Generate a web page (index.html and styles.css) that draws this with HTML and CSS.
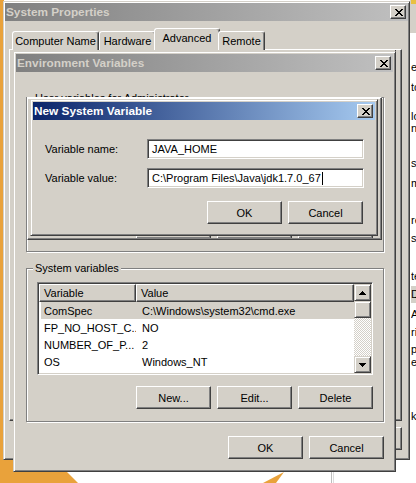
FILE: index.html
```html
<!DOCTYPE html>
<html>
<head>
<meta charset="utf-8">
<link rel="stylesheet" href="styles.css">
</head>
<body>
<svg class="wallpaper" width="416" height="483" viewBox="0 0 416 483">
  <rect width="416" height="483" fill="#ffffff"/>
  <rect x="0" y="0" width="4" height="483" fill="#e9a23b"/>
  <polygon points="0,450 45,450 78,483 0,483" fill="#e9a23b"/>
  <polygon points="263,483 284,472 276,483" fill="#e9a23b"/>
  <rect x="331" y="458" width="1" height="25" fill="#bdbdbd"/>
  <rect x="333" y="458" width="1" height="25" fill="#dcdcdc"/>
  <rect x="410" y="0" width="6" height="33" fill="#d4d0c8"/>
  <rect x="411" y="0" width="5" height="4" fill="#e8c040"/>
</svg>

<div class="behind">
  <div class="frag f1">e</div>
  <div class="frag f2">tc</div>
  <div class="frag f3">lo</div>
  <div class="frag f4">n</div>
  <div class="frag f5">s</div>
  <div class="frag f6">m</div>
  <div class="frag f7">re</div>
  <div class="frag f8">s</div>
  <div class="frag f9">te</div>
  <div class="frag f10 grayrow">D</div>
  <div class="frag f11">A</div>
  <div class="frag f12">ri</div>
  <div class="frag f13">p</div>
  <div class="frag f14">ec</div>
  <div class="frag f15">k</div>
</div>

<div class="win sysprop">
  <div class="titlebar">
    <span class="title">System Properties</span>
    <span class="closebtn"><svg width="8" height="7" viewBox="0 0 8 7"><path d="M0 0h2v1H0zM6 0h2v1H6zM1 1h2v1H1zM5 1h2v1H5zM2 2h4v1H2zM3 3h2v1H3zM2 4h4v1H2zM1 5h2v1H1zM5 5h2v1H5zM0 6h2v1H0zM6 6h2v1H6z" fill="#000"/></svg></span>
  </div>
  <div class="tabs">
    <div class="tab t1">Computer Name</div>
    <div class="tab t2">Hardware</div>
    <div class="tab t3 sel">Advanced</div>
    <div class="tab t4">Remote</div>
  </div>
  <div class="tabpanel"></div>
  <div class="sp-buttons">
    <div class="btn"></div>
    <div class="btn"></div>
    <div class="btn"></div>
  </div>
</div>

<div class="ghostline"></div>

<div class="win envvars">
  <div class="titlebar">
    <span class="title">Environment Variables</span>
    <span class="closebtn"><svg width="8" height="7" viewBox="0 0 8 7"><path d="M0 0h2v1H0zM6 0h2v1H6zM1 1h2v1H1zM5 1h2v1H5zM2 2h4v1H2zM3 3h2v1H3zM2 4h4v1H2zM1 5h2v1H1zM5 5h2v1H5zM0 6h2v1H0zM6 6h2v1H6z" fill="#000"/></svg></span>
  </div>
  <div class="env-body">
    <div class="group user-group">
      <span class="group-label user-label">User variables for Administrator</span>
      <div class="group-buttons">
        <div class="btn">New...</div>
        <div class="btn">Edit...</div>
        <div class="btn">Delete</div>
      </div>
    </div>
    <div class="group sys-group">
      <span class="group-label">System variables</span>
      <div class="listview">
        <div class="lv-main">
          <div class="lv-head">
            <div class="hcol hc1">Variable</div>
            <div class="hcol hc2">Value</div>
          </div>
          <div class="row sel"><div class="row-inner"><span class="c1">ComSpec</span><span class="c2">C:\Windows\system32\cmd.exe</span></div></div>
          <div class="row"><div class="row-inner"><span class="c1">FP_NO_HOST_C...</span><span class="c2">NO</span></div></div>
          <div class="row"><div class="row-inner"><span class="c1">NUMBER_OF_P...</span><span class="c2">2</span></div></div>
          <div class="row"><div class="row-inner"><span class="c1">OS</span><span class="c2">Windows_NT</span></div></div>
          <div class="row"><div class="row-inner"><span class="c1">Path</span><span class="c2">C:\Windows\system32;C:\Windows;C:\Windows\Sys</span></div></div>
        </div>
        <div class="scrollbar">
          <div class="sbtn"><svg width="7" height="4" viewBox="0 0 7 4"><path d="M3 0h1v1h1v1h1v1h1v1H0V3h1V2h1V1h1z" fill="#000"/></svg></div>
          <div class="sthumb"></div>
          <div class="strack"></div>
          <div class="sbtn"><svg width="7" height="4" viewBox="0 0 7 4"><path d="M0 0h7v1H6v1H5v1H4v1H3V3H2V2H1V1H0z" fill="#000"/></svg></div>
        </div>
      </div>
      <div class="group-buttons">
        <div class="btn">New...</div>
        <div class="btn">Edit...</div>
        <div class="btn">Delete</div>
      </div>
    </div>
    <div class="env-buttons">
      <div class="btn">OK</div>
      <div class="btn">Cancel</div>
    </div>
  </div>
</div>

<div class="dlg-ghost"></div>

<div class="win newvar">
  <div class="titlebar active">
    <span class="title">New System Variable</span>
    <span class="closebtn"><svg width="8" height="7" viewBox="0 0 8 7"><path d="M0 0h2v1H0zM6 0h2v1H6zM1 1h2v1H1zM5 1h2v1H5zM2 2h4v1H2zM3 3h2v1H3zM2 4h4v1H2zM1 5h2v1H1zM5 5h2v1H5zM0 6h2v1H0zM6 6h2v1H6z" fill="#000"/></svg></span>
  </div>
  <div class="nv-body">
    <div class="nv-form">
      <label class="nv-label">Variable name:</label>
      <div class="field">JAVA_HOME</div>
      <label class="nv-label">Variable value:</label>
      <div class="field">C:\Program Files\Java\jdk1.7.0_67<span class="caret"></span></div>
    </div>
    <div class="nv-buttons">
      <div class="btn">OK</div>
      <div class="btn">Cancel</div>
    </div>
  </div>
</div>
</body>
</html>
```

FILE: styles.css
```css
* { box-sizing: border-box; }
html, body { margin: 0; padding: 0; }
body {
  width: 416px;
  height: 483px;
  overflow: hidden;
  position: relative;
  background: #fff;
  font-family: "Liberation Sans", Arial, sans-serif;
  font-size: 11px;
  color: #000;
}
.wallpaper { position: absolute; left: 0; top: 0; }

/* text fragments of a window behind, at the right edge */
.behind {
  position: absolute;
  left: 411px;
  top: 33px;
  width: 5px;
  height: 440px;
  overflow: hidden;
  background: #fff;
}
.frag { height: 12px; line-height: 12px; white-space: nowrap; }
.f1 { margin-top: 28px; }
.f2 { margin-top: 8px; }
.f3 { margin-top: 17px; }
.f4 { margin-top: 0; }
.f5 { margin-top: 23px; }
.f6 { margin-top: 8px; }
.f7 { margin-top: 25px; }
.f8 { margin-top: 6px; }
.f9 { margin-top: 26px; }
.f10 { margin-top: 4px; }
.grayrow { background: #d4d0c8; height: 17px; line-height: 17px; }
.f11 { margin-top: 5px; }
.f12 { margin-top: 6px; }
.f13 { margin-top: 5px; }
.f14 { margin-top: 1px; }
.f15 { margin-top: 42px; }

/* classic window */
.win {
  position: absolute;
  background: #d4d0c8;
  border: 1px solid;
  border-color: #d4d0c8 #404040 #404040 #d4d0c8;
  box-shadow: inset 1px 1px #fff, inset -1px -1px #808080;
  padding: 1px;
  display: flex;
  flex-direction: column;
}
.titlebar {
  height: 18px;
  flex: none;
  display: flex;
  align-items: center;
  padding: 0 2px 0 1px;
  font-weight: bold;
  font-size: 11.8px;
  color: #d4d0c8;
  background: linear-gradient(to right, #808080, #c0c0c0);
}
.titlebar.active {
  background: linear-gradient(to right, #0a246a, #a6caf0);
  color: #fff;
}
.title { flex: 1; white-space: nowrap; overflow: hidden; }
.closebtn {
  width: 16px;
  height: 14px;
  flex: none;
  background: #d4d0c8;
  border: 1px solid;
  border-color: #fff #404040 #404040 #fff;
  box-shadow: inset -1px -1px #808080;
  display: flex;
  align-items: center;
  justify-content: center;
}
.closebtn svg { display: block; margin-left: 1px; }

.btn {
  width: 75px;
  height: 23px;
  flex: none;
  background: #d4d0c8;
  border: 1px solid;
  border-color: #fff #404040 #404040 #fff;
  box-shadow: inset -1px -1px #808080;
  display: flex;
  align-items: center;
  justify-content: center;
}

/* System Properties */
.sysprop { left: 3px; top: 1px; width: 407px; height: 459px; }
.tabs {
  flex: none;
  height: 22px;
  margin-top: 6px;
  padding-left: 7px;
  display: flex;
  align-items: flex-end;
  position: relative;
  z-index: 1;
}
.tab {
  height: 19px;
  margin-bottom: -1px;
  border: 1px solid;
  border-bottom: none;
  border-color: #fff #404040 transparent #fff;
  box-shadow: inset -1px 0 #808080;
  border-radius: 3px 3px 0 0;
  background: #d4d0c8;
  display: flex;
  align-items: center;
  justify-content: center;
  white-space: nowrap;
}
.t1 { width: 87px; }
.t2 { width: 57px; }
.t3 { width: 64px; }
.t4 { width: 47px; }
.tab.sel { height: 22px; margin-left: -2px; margin-right: -2px; width: 66px; padding-bottom: 3px; }
.tabpanel {
  height: 372px;
  flex: none;
  margin: 0 6px 0 4px;
  border: 1px solid;
  border-color: #fff #404040 #404040 #fff;
  box-shadow: inset -1px -1px #808080;
}
.sp-buttons {
  display: flex;
  justify-content: flex-end;
  gap: 6px;
  margin: 6px 6px 0 0;
}

.ghostline {
  position: absolute;
  left: 395px;
  top: 50px;
  width: 1px;
  height: 373px;
  background: #404040;
}

/* Environment Variables */
.envvars { left: 13px; top: 51px; width: 383px; height: 421px; padding: 2px; }
.env-body {
  flex: 1;
  display: flex;
  flex-direction: column;
  padding: 25px 9px 0 10px;
}
.group {
  position: relative;
  border: 1px solid #808080;
  box-shadow: inset 1px 1px #fff, 1px 1px #fff;
  display: flex;
  flex-direction: column;
}
.group-label {
  position: absolute;
  left: 6px;
  top: -7px;
  padding: 0 2px;
  background: #d4d0c8;
  line-height: 13px;
  white-space: nowrap;
}
.user-label { top: -6px; height: 5px; overflow: hidden; background: transparent; }
.user-group { height: 155px; justify-content: flex-end; padding: 0 10px 12px 0; }
.sys-group { height: 154px; margin-top: 16px; padding: 13px 10px 0 10px; }
.group-buttons { display: flex; justify-content: flex-end; gap: 6px; }
.sys-group .group-buttons { margin-top: 11px; }
.env-buttons {
  display: flex;
  justify-content: flex-end;
  gap: 6px;
  margin-top: 14px;
}

.listview {
  height: 93px;
  flex: none;
  background: #fff;
  border: 1px solid;
  border-color: #808080 #fff #fff #808080;
  box-shadow: inset 1px 1px #404040, inset -1px -1px #d4d0c8;
  padding: 1px;
  display: flex;
  overflow: hidden;
}
.lv-main { flex: 1; display: flex; flex-direction: column; overflow: hidden; }
.lv-head { display: flex; height: 18px; flex: none; }
.hcol {
  height: 18px;
  background: #d4d0c8;
  border: 1px solid;
  border-color: #fff #404040 #404040 #fff;
  box-shadow: inset -1px -1px #808080;
  display: flex;
  align-items: center;
  padding-left: 4px;
  white-space: nowrap;
}
.hc1 { width: 97px; }
.hc2 { flex: 1; }
.row { height: 17px; flex: none; padding-left: 2px; display: flex; }
.row-inner { flex: 1; display: flex; align-items: center; white-space: nowrap; overflow: hidden; }
.row.sel .row-inner { background: #d4d0c8; }
.c1 { width: 95px; padding-left: 3px; flex: none; overflow: hidden; }
.c2 { padding-left: 6px; }
.scrollbar { width: 17px; flex: none; display: flex; flex-direction: column; }
.sbtn, .sthumb {
  height: 17px;
  flex: none;
  background: #d4d0c8;
  border: 1px solid;
  border-color: #d4d0c8 #404040 #404040 #d4d0c8;
  box-shadow: inset 1px 1px #fff, inset -1px -1px #808080;
  display: flex;
  align-items: center;
  justify-content: center;
}
.sbtn svg { display: block; }
.strack {
  flex: 1;
  background: repeating-conic-gradient(#ffffff 0 25%, #d4d0c8 0 50%) 0 0 / 2px 2px;
}

.dlg-ghost {
  position: absolute;
  left: 27px;
  top: 97px;
  width: 355px;
  height: 143px;
  border: 1px solid;
  border-color: #fff #404040 #404040 #fff;
  box-shadow: inset -1px -1px #808080;
}

/* New System Variable */
.newvar { left: 30px; top: 99px; width: 348px; height: 137px; padding: 2px; }
.nv-body { flex: 1; display: flex; flex-direction: column; padding: 19px 12px 0 12px; }
.nv-form {
  display: grid;
  grid-template-columns: 102px 217px;
  row-gap: 9px;
  align-items: center;
}
.field {
  height: 20px;
  background: #fff;
  border: 1px solid;
  border-color: #808080 #fff #fff #808080;
  box-shadow: inset 1px 1px #404040, inset -1px -1px #d4d0c8;
  padding: 0 4px;
  display: flex;
  align-items: center;
  white-space: nowrap;
}
.caret { display: inline-block; width: 1px; height: 13px; background: #000; margin-left: 1px; }
.nv-buttons {
  display: flex;
  justify-content: flex-end;
  gap: 6px;
  margin-top: 13px;
}
```
